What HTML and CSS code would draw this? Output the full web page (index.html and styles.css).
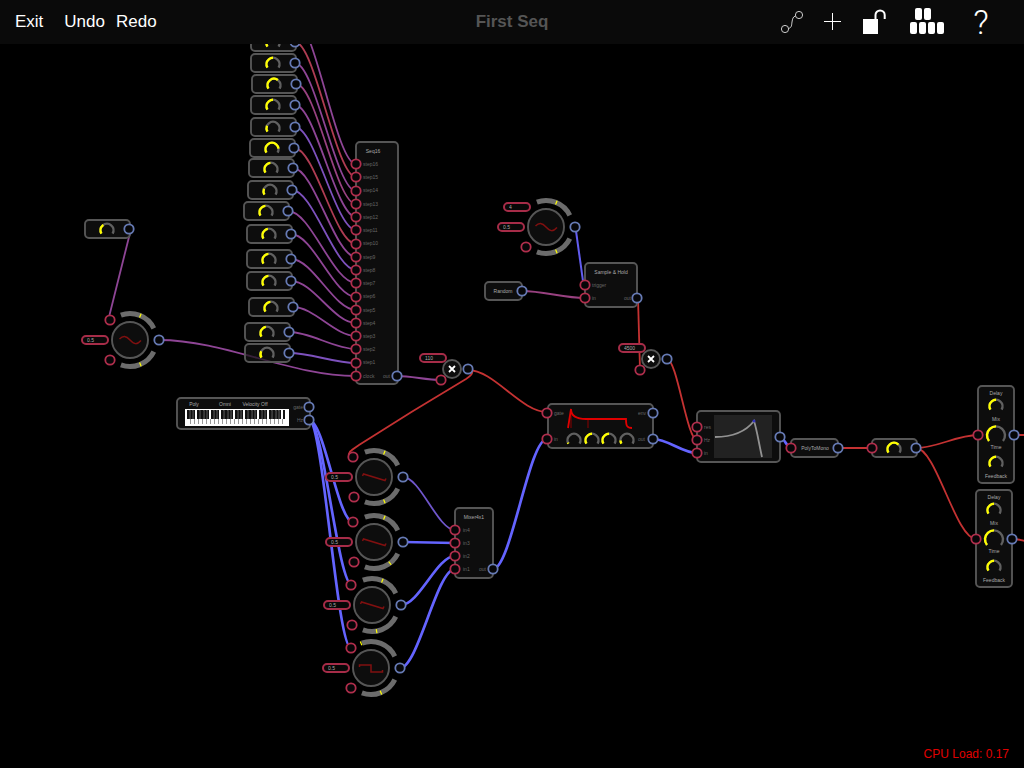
FILE: index.html
```html
<!DOCTYPE html>
<html lang="en">
<head>
<meta charset="utf-8">
<meta name="viewport" content="width=device-width, initial-scale=1">
<title>First Seq</title>
<link rel="stylesheet" href="styles.css">
</head>
<body>
<header class="toolbar">
  <nav class="toolbar-left">
    <button class="text-button exit" type="button">Exit</button>
    <button class="text-button" type="button">Undo</button>
    <button class="text-button" type="button">Redo</button>
  </nav>
  <h1 class="title">First Seq</h1>
  <div class="toolbar-right">
    <button class="icon-button" type="button" aria-label="Patch">
      <svg width="22" height="24" viewBox="0 0 22 24" class="icon-thin"><circle cx="4" cy="19" r="3.6"/><circle cx="18" cy="5" r="3.6"/><path d="M7.5 18.5C11 17.5 10.500 15 11 12S12 6.500 14.500 6"/></svg>
    </button>
    <button class="icon-button" type="button" aria-label="Add">
      <svg width="18" height="24" viewBox="0 0 18 24" class="icon-line"><path d="M9.500 3v17M1 11.500h17"/></svg>
    </button>
    <button class="icon-button" type="button" aria-label="Unlock">
      <svg width="26" height="28" viewBox="0 0 26 28" class="icon-solid"><path d="M2 11h15v15H2z"/><path class="shackle" d="M14.500 11.500V7a4.600 4.600 0 0 1 9.200 0v4"/></svg>
    </button>
    <button class="icon-button" type="button" aria-label="Keyboard">
      <svg width="40" height="28" viewBox="0 0 40 28" class="icon-solid"><rect x="8" y="0" width="7" height="12" rx="2"/><rect x="17" y="0" width="7" height="12" rx="2"/><rect x="3" y="14" width="7" height="12" rx="2"/><rect x="12" y="14" width="7" height="12" rx="2"/><rect x="21" y="14" width="7" height="12" rx="2"/><rect x="30" y="14" width="7" height="12" rx="2"/></svg>
    </button>
    <button class="icon-button help" type="button">?</button>
  </div>
</header>

<main class="stage">
  <svg class="patch" width="100%" height="100%" role="img" aria-label="Synth patch">
    <defs>
      <circle id="in" class="port port-in" r="4.700"/>
      <circle id="out" class="port port-out" r="4.700"/>
      <g id="knob">
        <path class="knob-track" d="M-5.600 3.600A6.500 6.500 0 1 1 5.600 3.600"/>
        <path class="knob-value" pathLength="100" d="M-5.600 3.600A6.500 6.500 0 1 1 5.600 3.600"/>
      </g>
      <g id="knob-large">
        <path class="knob-track" d="M-7 6A9 9 0 1 1 7 6"/>
        <path class="knob-value" pathLength="100" d="M-7 6A9 9 0 1 1 7 6"/>
      </g>
      <g id="step">
        <rect class="box" x="-44" y="-9" width="45" height="18" rx="4"/>
        <use href="#knob" x="-22" y="1"/>
        <use href="#out"/>
      </g>
      <path id="tick" class="tick" d="M24.500 0h4"/>
      <g id="osc">
        <circle class="box" r="18"/>
        <path class="band" d="M-9.100-24.900A26.500 26.500 0 0 1 23.800-11.600M-9.100 24.900A26.500 26.500 0 0 0 23.800 11.600"/>
        <use href="#in" x="-20" y="20"/>
        <use href="#out" x="29"/>
      </g>
      <path id="sine" class="wave" d="M-10.500-1C-7-4.500-4-4.500 0 0S7 5 11 .5"/>
      <path id="saw" class="wave" d="M-11.500-1L-10.500-3 11 3.500 12 1.500"/>
      <path id="square" class="wave" d="M-11.500-1V-3H0V4H11.500V2"/>
      <g id="multiply">
        <circle class="box" r="9"/>
        <path class="cross" d="M-3-3L3 3M3-3L-3 3"/>
        <use href="#out" x="16"/>
        <use href="#in" x="-11" y="11"/>
      </g>
      <g id="delay">
        <rect class="box" x="-18" y="-49" width="36" height="97" rx="4"/>
        <use href="#knob" y="-29"/>
        <use href="#knob-large" y="0"/>
        <use href="#knob" y="28"/>
        <use href="#in" x="-18"/>
        <use href="#out" x="18"/>
      </g>
      <pattern id="black-keys" width="24" height="10" patternUnits="userSpaceOnUse" x="186" y="410">
        <path d="M1 0h8v10H1zM11 0h12v10H11z" fill="#111"/>
        <path d="M3 0h1v10M6 0h1v10M13 0h1v10M17 0h1v10M20 0h1v10" stroke="#999" stroke-width=".6"/>
      </pattern>
      <pattern id="white-keys" width="4" height="6" patternUnits="userSpaceOnUse" x="187" y="419">
        <path d="M3 0h1v6H3z" fill="#999"/>
      </pattern>
    </defs>

    <g class="wires">
      <path class="purple" d="M295 20C315 20 336 164 356 164"/>
      <path class="red" d="M295 42C315 42 336 177 356 177"/>
      <path class="purple" d="M295 63C315 63 336 191 356 191"/>
      <path class="rose" d="M296 84C316 84 336 204 356 204"/>
      <path class="purple" d="M295 105C315 105 336 217 356 217"/>
      <path class="violet" d="M295 127C315 127 336 230 356 230"/>
      <path class="red" d="M294 148C315 148 335 244 356 244"/>
      <path class="purple" d="M293 168C314 168 335 257 356 257"/>
      <path class="violet" d="M292 190C313 190 335 270 356 270"/>
      <path class="purple" d="M288 211C311 211 333 283 356 283"/>
      <path class="purple" d="M291 234C313 234 334 297 356 297"/>
      <path class="purple" d="M291 259C313 259 334 310 356 310"/>
      <path class="purple" d="M291 281C313 281 334 323 356 323"/>
      <path class="purple" d="M293 307C314 307 335 336 356 336"/>
      <path class="purple" d="M289 332C311 332 334 349 356 349"/>
      <path class="violet" d="M289 353C311 353 334 363 356 363"/>
      <path class="purple" d="M130 233L109 317"/>
      <path class="purple" d="M159 340C225 340 290 376 356 376"/>
      <path class="purple" d="M397 376C412 376 426 380 441 380"/>
      <path class="rose" d="M522 291C543 291 564 298 585 298"/>
      <path class="scarlet" d="M638 298L640 370"/>
      <path class="blue-thin" d="M576 231L583 281"/>
      <path class="scarlet" d="M468 370C474 370 474 374 466 379Q412 411 359 445C350 451 348 452 349 457"/>
      <path class="scarlet" d="M468 370C494 370 521 412 547 412"/>
      <path class="scarlet" d="M667 359C677 359 687 440 697 440"/>
      <path class="blue" d="M309 420C324 420 338 522 353 522"/>
      <path class="blue" d="M309 420C323 420 338 585 352 585"/>
      <path class="blue" d="M309 420C323 420 337 648 351 648"/>
      <path class="indigo" d="M403 477C420 477 438 530 455 530"/>
      <path class="blue" d="M403 542L455 543"/>
      <path class="blue" d="M401 605C419 605 437 556 455 556"/>
      <path class="blue" d="M400 668C418 668 437 569 455 569"/>
      <path class="blue" d="M493 569C511 569 529 439 547 439"/>
      <path class="blue" d="M653 439C668 439 682 453 697 453"/>
      <path class="blue" d="M780 437C784 437 787 448 791 448"/>
      <path class="scarlet" d="M838 448H872"/>
      <path class="scarlet" d="M916 448C937 448 957 435 978 435"/>
      <path class="scarlet" d="M916 448C936 448 956 539 976 539"/>
      <path class="scarlet" d="M1014 435H1400M1012 539C1020 539 1022 541 1040 544"/>
    </g>

    <g class="nodes">
      <use href="#step" x="295" y="42" style="--v:85"/>
      <use href="#step" x="295" y="63" style="--v:50"/>
      <use href="#step" x="296" y="84" style="--v:65"/>
      <use href="#step" x="295" y="105" style="--v:50"/>
      <use href="#step" x="295" y="127" style="--v:22"/>
      <use href="#step" x="294" y="148" style="--v:85"/>
      <use href="#step" x="293" y="168" style="--v:48"/>
      <use href="#step" x="292" y="190" style="--v:22"/>
      <use href="#step" x="288" y="211" style="--v:48"/>
      <use href="#step" x="291" y="234" style="--v:46"/>
      <use href="#step" x="291" y="259" style="--v:48"/>
      <use href="#step" x="291" y="281" style="--v:48"/>
      <use href="#step" x="293" y="307" style="--v:48"/>
      <use href="#step" x="289" y="332" style="--v:46"/>
      <use href="#step" x="289" y="353" style="--v:24"/>
      <use href="#step" x="129" y="229" style="--v:36"/>

      <rect class="box" x="356" y="142" width="42" height="242" rx="4"/>
      <text class="name" x="373" y="153">Seq16</text>
      <g class="label">
        <text x="363" y="166">step16</text><text x="363" y="179">step15</text><text x="363" y="192">step14</text><text x="363" y="206">step13</text>
        <text x="363" y="219">step12</text><text x="363" y="232">step11</text><text x="363" y="245">step10</text><text x="363" y="259">step9</text>
        <text x="363" y="272">step8</text><text x="363" y="285">step7</text><text x="363" y="298">step6</text><text x="363" y="312">step5</text>
        <text x="363" y="325">step4</text><text x="363" y="338">step3</text><text x="363" y="351">step2</text><text x="363" y="364">step1</text>
        <text x="363" y="378">clock</text><text x="383" y="378">out</text>
      </g>
      <use href="#in" x="356" y="164"/><use href="#in" x="356" y="177"/><use href="#in" x="356" y="191"/><use href="#in" x="356" y="204"/>
      <use href="#in" x="356" y="217"/><use href="#in" x="356" y="230"/><use href="#in" x="356" y="244"/><use href="#in" x="356" y="257"/>
      <use href="#in" x="356" y="270"/><use href="#in" x="356" y="283"/><use href="#in" x="356" y="297"/><use href="#in" x="356" y="310"/>
      <use href="#in" x="356" y="323"/><use href="#in" x="356" y="336"/><use href="#in" x="356" y="349"/><use href="#in" x="356" y="363"/>
      <use href="#in" x="356" y="376"/><use href="#out" x="397" y="376"/>

      <g transform="translate(130 340)"><use href="#osc"/><use href="#sine"/><use href="#in" x="-20" y="-20"/><use href="#tick" transform="rotate(-67)"/><use href="#tick" transform="rotate(67)"/></g>
      <g transform="translate(374 477)"><use href="#osc"/><use href="#saw"/><use href="#in" x="-21" y="-20"/><use href="#tick" transform="rotate(-67)"/><use href="#tick" transform="rotate(67)"/></g>
      <g transform="translate(374 542)"><use href="#osc"/><use href="#saw"/><use href="#in" x="-21" y="-20"/><use href="#tick" transform="rotate(-67)"/><use href="#tick" transform="rotate(53)"/></g>
      <g transform="translate(372 605)"><use href="#osc"/><use href="#saw"/><use href="#in" x="-21" y="-20"/><use href="#tick" transform="rotate(-67)"/><use href="#tick" transform="rotate(80)"/></g>
      <g transform="translate(371 668)"><use href="#osc"/><use href="#square"/><use href="#in" x="-20" y="-20"/><use href="#tick" transform="rotate(-112)"/><use href="#tick" transform="rotate(68)"/></g>
      <g transform="translate(546 227)"><use href="#osc"/><use href="#sine"/><use href="#tick" transform="rotate(-67)"/><use href="#tick" transform="rotate(67)"/></g>

      <use href="#multiply" x="452" y="369"/>
      <use href="#multiply" x="651" y="359"/>

      <rect class="box" x="177" y="398" width="133" height="31" rx="4"/>
      <text class="name" x="194" y="406">Poly</text><text class="name" x="225" y="406">Omni</text><text class="name" x="255" y="406">Velocity Off</text>
      <path fill="#fff" d="M185 409h104v17H185z"/>
      <path fill="url(#black-keys)" d="M187 410h98v9H187z"/>
      <path fill="url(#white-keys)" d="M188 419h97v5H188z"/>
      <g class="label end"><text x="303" y="409">gate</text><text x="303" y="422">Hz</text></g>
      <use href="#out" x="309" y="407"/><use href="#out" x="309" y="420"/>

      <rect class="box" x="455" y="508" width="38" height="70" rx="4"/>
      <text class="name" x="474" y="519">Mixer4x1</text>
      <g class="label"><text x="463" y="532">in4</text><text x="463" y="545">in3</text><text x="463" y="558">in2</text><text x="463" y="571">in1</text><text x="479" y="571">out</text></g>
      <use href="#in" x="455" y="530"/><use href="#in" x="455" y="543"/><use href="#in" x="455" y="556"/><use href="#in" x="455" y="569"/><use href="#out" x="493" y="569"/>

      <rect class="box" x="485" y="282" width="37" height="18" rx="4"/>
      <text class="name" x="503" y="293">Random</text>
      <use href="#out" x="522" y="291"/>

      <rect class="box" x="585" y="263" width="52" height="44" rx="4"/>
      <text class="name" x="611" y="274">Sample &amp; Hold</text>
      <g class="label"><text x="592" y="287">trigger</text><text x="592" y="300">in</text><text x="624" y="300">out</text></g>
      <use href="#in" x="585" y="285"/><use href="#in" x="585" y="298"/><use href="#out" x="637" y="298"/>

      <rect class="box" x="548" y="404" width="105" height="44" rx="4"/>
      <path class="guide" d="M571 413V428M588 420V428"/>
      <path class="envelope" d="M568 428L571 409C571 416 576 419 586 419H626C626 426 627 428 632 428"/>
      <use href="#knob" x="574" y="440" style="--v:4"/><use href="#knob" x="592" y="440" style="--v:50"/><use href="#knob" x="609" y="440" style="--v:50"/><use href="#knob" x="627" y="440" style="--v:12"/>
      <g class="label"><text x="554" y="415">gate</text><text x="554" y="441">in</text><text x="638" y="415">env</text><text x="638" y="441">out</text></g>
      <use href="#in" x="547" y="413"/><use href="#in" x="547" y="439"/><use href="#out" x="653" y="413"/><use href="#out" x="653" y="439"/>

      <rect class="box" x="697" y="411" width="83" height="51" rx="4"/>
      <path class="screen" d="M714 415h58v43h-58z"/>
      <path class="response" d="M715 437C734 437 747 430 754 421C757 430 759 444 762 457"/>
      <circle cx="754" cy="421" r="1.500" fill="#3333c0"/>
      <g class="label"><text x="704" y="429">res</text><text x="704" y="442">Hz</text><text x="704" y="455">in</text></g>
      <use href="#in" x="697" y="427"/><use href="#in" x="697" y="440"/><use href="#in" x="697" y="453"/><use href="#out" x="780" y="437"/>

      <rect class="box" x="791" y="439" width="47" height="18" rx="4"/>
      <text class="name" x="815" y="450">PolyToMono</text>
      <use href="#in" x="791" y="448"/><use href="#out" x="838" y="448"/>

      <use href="#step" x="916" y="448" style="--v:68"/>
      <use href="#in" x="872" y="448"/>

      <use href="#delay" x="996" y="435" style="--v:50"/>
      <text class="name" x="996" y="395">Delay</text><text class="name" x="996" y="421">Mix</text><text class="name" x="996" y="449">Time</text><text class="name" x="996" y="478">Feedback</text>
      <use href="#delay" x="994" y="539" style="--v:50"/>
      <text class="name" x="994" y="499">Delay</text><text class="name" x="994" y="525">Mix</text><text class="name" x="994" y="553">Time</text><text class="name" x="994" y="582">Feedback</text>
    </g>
  </svg>

  <input class="value" style="left:81px;top:335px" value="0.5" aria-label="Oscillator 1 amplitude">
  <input class="value" style="left:325px;top:472px" value="0.5" aria-label="Oscillator 2 amplitude">
  <input class="value" style="left:325px;top:537px" value="0.5" aria-label="Oscillator 3 amplitude">
  <input class="value" style="left:323px;top:600px" value="0.5" aria-label="Oscillator 4 amplitude">
  <input class="value" style="left:322px;top:663px" value="0.5" aria-label="Oscillator 5 amplitude">
  <input class="value" style="left:497px;top:222px" value="0.5" aria-label="Oscillator 6 amplitude">
  <input class="value" style="left:503px;top:202px" value="4" aria-label="Oscillator 6 frequency">
  <input class="value" style="left:419px;top:353px" value="110" aria-label="Multiplier 1">
  <input class="value" style="left:618px;top:343px" value="4500" aria-label="Multiplier 2">
  <p class="cpu">CPU Load: 0.17</p>
</main>
</body>
</html>
```
FILE: styles.css
```css
* { box-sizing: border-box; }

body {
  margin: 0;
  min-height: 100vh;
  background: #000;
  color: #fff;
  font-family: "Liberation Sans", Arial, sans-serif;
  overflow: hidden;
}

/* Toolbar */
.toolbar {
  position: relative;
  z-index: 1;
  display: grid;
  grid-template-columns: 1fr auto 1fr;
  align-items: center;
  height: 44px;
  padding: 0 15px;
  background: #0a0a0a;
}

.toolbar-left { display: flex; gap: 11px; }
.exit { margin-right: 10px; }

.text-button,
.icon-button {
  padding: 0;
  border: 0;
  background: none;
  color: #fff;
  font: inherit;
}

.text-button { font-size: 17px; line-height: 22px; }

.title {
  margin: 0;
  color: #555;
  font-size: 17px;
  line-height: 22px;
}

.toolbar-right {
  display: flex;
  align-items: center;
  justify-content: flex-end;
  gap: 20px;
  padding-right: 14px;
}

.icon-button { display: grid; place-items: center; }

.help {
  width: 28px;
  font-family: Roboto, "Liberation Sans", sans-serif;
  font-size: 34px;
  font-weight: 300;
  line-height: 44px;
}

.icon-thin { fill: none; stroke: #ccc; stroke-width: 1; }
.icon-line { fill: none; stroke: #fff; stroke-width: 1; }
.icon-solid { fill: #fff; }
.shackle { fill: none; stroke: #fff; stroke-width: 2; }

/* Canvas */
.stage {
  position: absolute;
  inset: 0;
  overflow: hidden;
}

.patch { display: block; }

.wires { fill: none; stroke-width: 1.8px; }
.purple { stroke: #8e4595; }
.rose { stroke: #984180; }
.red { stroke: #ae3c52; }
.violet { stroke: #7d51bd; }
.scarlet { stroke: #c43232; }
.indigo { stroke: #6f56cb; }
.blue-thin { stroke: #625df0; stroke-width: 2px; }
.blue { stroke: #6464ff; stroke-width: 2.7px; }

.box { fill: rgba(18, 18, 18, .7); stroke: #565656; stroke-width: 1.9px; }
.port { fill: #060608; stroke-width: 1.8px; }
.port-in { stroke: #b02e4c; }
.port-out { stroke: #667ab4; }

.knob-track,
.knob-value { fill: none; stroke-width: 2.4px; }
.knob-track { stroke: #606060; }
.knob-value { stroke: #ff0; stroke-dasharray: var(--v) 200; }

.band { fill: none; stroke: #6c6c6c; stroke-width: 5px; }
.tick { stroke: #ff0; stroke-width: 1.2px; }
.wave { fill: none; stroke: #801010; stroke-width: 1.5px; }
.cross { stroke: #fff; stroke-width: 1.8px; }

.guide { stroke: #4c0606; stroke-width: 2px; }
.envelope { fill: none; stroke: #e00000; stroke-width: 1.8px; }
.screen { fill: #222; }
.response { fill: none; stroke: #929292; stroke-width: 1.8px; }

.name { fill: #aaa; font-size: 5px; text-anchor: middle; }
.label { fill: #666; font-size: 5px; }
.end { text-anchor: end; }

.value {
  position: absolute;
  width: 28px;
  height: 10px;
  padding: 0 0 0 4px;
  border: 2px solid #a62c48;
  border-radius: 5px;
  background: #080808;
  color: #aaa;
  font: 5px/6px "Liberation Sans", Arial, sans-serif;
}

.cpu {
  position: absolute;
  right: 15px;
  bottom: 7px;
  margin: 0;
  color: #e00000;
  font-size: 12px;
  line-height: 14px;
}
```
